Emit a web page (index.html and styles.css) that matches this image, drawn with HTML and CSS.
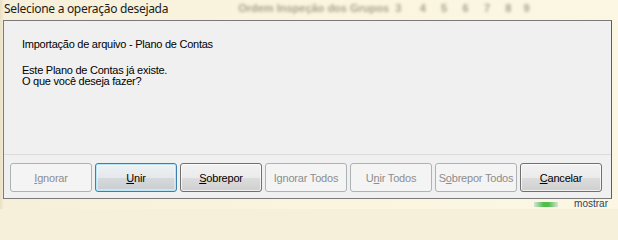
FILE: index.html
```html
<!DOCTYPE html>
<html lang="pt-BR">
<head>
<meta charset="utf-8">
<title>Selecione a operação desejada</title>
<link rel="stylesheet" href="styles.css">
</head>
<body>
<div class="window">
  <div class="titlebar">
    <span class="title">Selecione a operação desejada</span>
    <span class="behind">Ordem Inspeção dos Grupos &nbsp;3 &nbsp;&nbsp;&nbsp; &nbsp;4 &nbsp;&nbsp; &nbsp;5 &nbsp;&nbsp; &nbsp;6 &nbsp;&nbsp; &nbsp;7 &nbsp;&nbsp; &nbsp;8 &nbsp;&nbsp; 9</span>
  </div>
  <div class="client">
    <div class="content">
      <p class="heading">Importação de arquivo - Plano de Contas</p>
      <p class="message">Este Plano de Contas já existe.<br>O que você deseja fazer?</p>
    </div>
    <div class="footer">
      <button class="btn" disabled><u>I</u>gnorar</button>
      <button class="btn default"><u>U</u>nir</button>
      <button class="btn"><u>S</u>obrepor</button>
      <button class="btn" disabled>I<u>g</u>norar Todos</button>
      <button class="btn" disabled>U<u>n</u>ir Todos</button>
      <button class="btn" disabled>S<u>o</u>brepor Todos</button>
      <button class="btn"><u>C</u>ancelar</button>
    </div>
  </div>
  <div class="desk"><span class="desk-mark"></span><span class="desk-item">mostrar</span></div>
</div>
</body>
</html>
```

FILE: styles.css
```css
html, body {
  margin: 0;
  padding: 0;
}
body {
  width: 618px;
  height: 209px;
  overflow: hidden;
  background: #f6efda;
  font-family: "Liberation Sans", Arial, sans-serif;
}
.window {
  width: 618px;
  height: 209px;
  display: flex;
  flex-direction: column;
  background: linear-gradient(90deg, #e9dfc4 0px, #f6efd9 4px, #fbf5e0 50%, #fcf7e2 100%);
}
.titlebar {
  height: 20px;
  flex: none;
  display: flex;
  align-items: center;
  padding-left: 4px;
  white-space: nowrap;
  overflow: hidden;
}
.title {
  font-family: "Noto Sans", "Open Sans", sans-serif;
  font-size: 12px;
  color: #1c1c1c;
  letter-spacing: -0.3px;
  margin-top: -4px;
}
.behind {
  margin-left: 70px;
  font-size: 11px;
  font-weight: 700;
  color: #6f6a55;
  filter: blur(1.4px);
  opacity: 0.6;
  margin-top: -4px;
}
.client {
  flex: none;
  margin: 0 6px 0 3px;
  height: 177px;
  border: 1px solid #7a7a7a;
  border-right-color: #5e5e5e;
  background: #f0f0f0;
  display: flex;
  flex-direction: column;
}
.content {
  height: 133px;
  padding: 18px 0 0 18px;
  box-sizing: border-box;
  font-size: 11px;
  letter-spacing: -0.25px;
  color: #000;
}
.content p {
  margin: 0;
  line-height: 11px;
}
.heading {
  margin-bottom: 15px !important;
}
.footer {
  border-top: 1px solid #dcdcdc;
  padding: 8px 0 0 6px;
  display: flex;
  gap: 3px;
}
.btn {
  width: 82px;
  height: 29px;
  box-sizing: border-box;
  border: 1px solid #707070;
  border-radius: 3px;
  background: linear-gradient(#f2f2f2 0%, #ebebeb 50%, #dddddd 51%, #cfcfcf 100%);
  box-shadow: inset 0 0 0 1px rgba(255,255,255,0.7);
  font-family: "Liberation Sans", Arial, sans-serif;
  font-size: 11px;
  font-weight: 400;
  letter-spacing: -0.2px;
  color: #000;
  padding: 0;
  margin: 0;
}
.btn u {
  text-underline-offset: 1px;
}
.btn:disabled {
  border-color: #adb2b5;
  background: #f4f4f4;
  box-shadow: none;
  color: #8d8d8d;
}
.btn.default {
  border-color: #3c7fb1;
  box-shadow: inset 0 0 0 1px #b7e5f7, inset 0 0 0 2px rgba(255,255,255,0.4);
  background: linear-gradient(#eef2f4 0%, #e6e9eb 50%, #d7dadc 51%, #cacdcf 100%);
}
.desk {
  flex: 1;
  display: flex;
  justify-content: flex-end;
  align-items: flex-end;
  padding-right: 10px;
  overflow: hidden;
}
.desk-mark {
  width: 24px;
  height: 5px;
  margin-right: 16px;
  margin-bottom: 2px;
  background: linear-gradient(90deg, #d9e2d9, #4fbf4a 40%, #4fbf4a 60%, #d9e2d9);
  filter: blur(0.6px);
}
.desk-item {
  font-size: 10px;
  line-height: 10px;
  color: #2c3d66;
}
```
